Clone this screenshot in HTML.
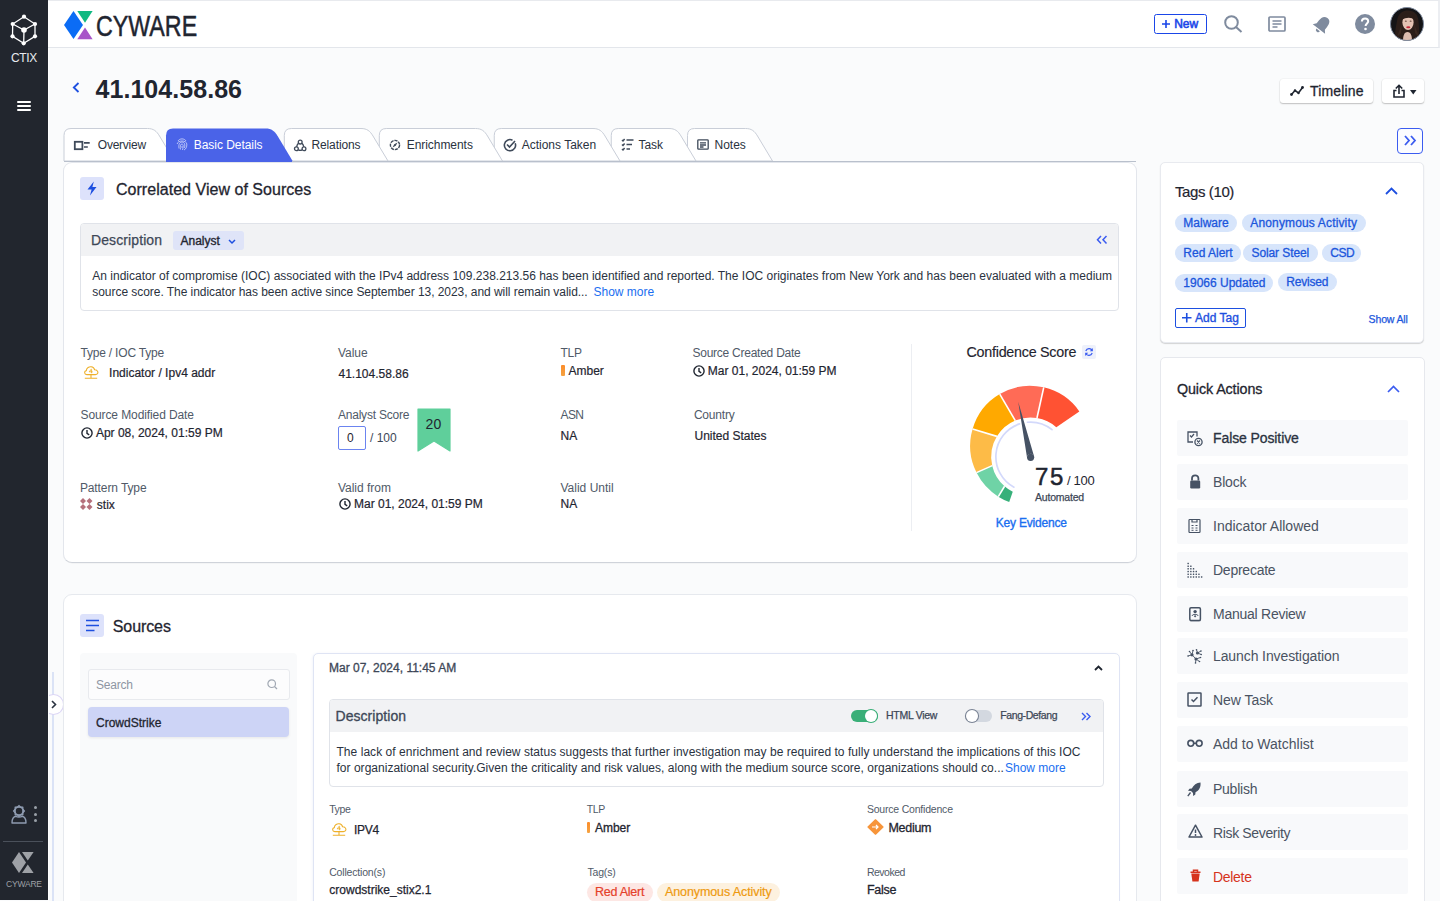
<!DOCTYPE html>
<html><head><meta charset="utf-8">
<style>
*{box-sizing:border-box;margin:0;padding:0}
html,body{width:1440px;height:901px;overflow:hidden}
body{position:relative;background:#fafbfc;font-family:"Liberation Sans",sans-serif;color:#1f2530}
.a{position:absolute;white-space:nowrap}
svg.a{overflow:visible}
</style></head>
<body>

<div class="a" style="left:0px;top:0px;width:48px;height:900px;background:#22262e"></div>
<div class="a" style="left:48px;top:48px;width:1.4px;height:853px;background:#fff"></div>
<svg class="a" style="left:11px;top:15px;" width="26" height="30" viewBox="0 0 26 30"><g stroke="#fff" stroke-width="1.3" fill="none">
<path d="M13,1.7 L24,9 L24,21.3 L12.7,28.3 L1.5,21.3 L1.7,9 Z"/>
<path d="M1.7,9 L13,15 L24,9 M13,15 L12.7,28.3"/></g>
<g fill="#fff"><circle cx="13" cy="1.7" r="2.1"/><circle cx="24" cy="9" r="2.1"/><circle cx="24" cy="21.3" r="2.1"/><circle cx="12.7" cy="28.3" r="2.1"/><circle cx="1.5" cy="21.3" r="2.1"/><circle cx="1.7" cy="9" r="2.1"/><circle cx="13" cy="15" r="2.8"/></g></svg>
<div class="a" style="left:11px;top:51.84px;font-size:12px;line-height:12px;color:#e8eaee;letter-spacing:-0.4px;">CTIX</div>
<div class="a" style="left:17px;top:101px;width:14px;height:2px;background:#fff;border-radius:1px"></div>
<div class="a" style="left:17px;top:105px;width:14px;height:2px;background:#fff;border-radius:1px"></div>
<div class="a" style="left:17px;top:109px;width:14px;height:2px;background:#fff;border-radius:1px"></div>
<svg class="a" style="left:11px;top:805px;" width="16" height="19" viewBox="0 0 16 19"><g stroke="#8e9bb0" stroke-width="1.4" fill="none" stroke-linejoin="round"><path d="M13.40,6.00 L12.41,6.88 L12.16,7.72 L11.74,8.50 L11.82,9.82 L10.50,9.74 L9.72,10.16 L8.88,10.41 L8.00,11.40 L7.12,10.41 L6.28,10.16 L5.50,9.74 L4.18,9.82 L4.26,8.50 L3.84,7.72 L3.59,6.88 L2.60,6.00 L3.59,5.12 L3.84,4.28 L4.26,3.50 L4.18,2.18 L5.50,2.26 L6.28,1.84 L7.12,1.59 L8.00,0.60 L8.88,1.59 L9.72,1.84 L10.50,2.26 L11.82,2.18 L11.74,3.50 L12.16,4.28 L12.41,5.12 Z"/><circle cx="8" cy="6" r="0"/><path d="M1,18 C1,13 3.5,11.5 5,11.3 C6,12.3 10,12.3 11,11.3 C12.5,11.5 15,13 15,18 Z"/></g><circle cx="8" cy="6" r="4" fill="none" stroke="#8e9bb0" stroke-width="1.5"/></svg>
<div class="a" style="left:33.5px;top:806.1px;width:3px;height:3px;background:#9aa0a8;border-radius:50%"></div>
<div class="a" style="left:33.5px;top:812.9px;width:3px;height:3px;background:#9aa0a8;border-radius:50%"></div>
<div class="a" style="left:33.5px;top:819px;width:3px;height:3px;background:#9aa0a8;border-radius:50%"></div>
<div class="a" style="left:3px;top:841px;width:40px;height:1px;background:#4a505a"></div>
<svg class="a" style="left:12px;top:852px;" width="22" height="22" viewBox="0 0 22 22"><path d="M0,10.5 L7,0 L14,10.5 L7,21 Z" fill="#9ea1a6"/><path d="M10,0 L21.6,0 L15.8,8.6 Z" fill="#9ea1a6"/><path d="M15.8,12.5 L21.6,21 L10,21 Z" fill="#9ea1a6"/></svg>
<div class="a" style="left:6px;top:879.80px;font-size:8.5px;line-height:8.5px;color:#9ea1a6;letter-spacing:-0.2px;">CYWARE</div>
<div class="a" style="left:48px;top:0px;width:1392px;height:48px;background:#fff;border-top:1px solid #e8eaee;border-bottom:1px solid #e3e6eb;border-right:2px solid #eceef2"></div>
<svg class="a" style="left:63.5px;top:11.2px;" width="29" height="29" viewBox="0 0 29 29"><path d="M0,14 L9.5,0 L19,14 L9.5,28 Z" fill="#0b6cf5"/><path d="M13.3,0 L28.6,0 L21,11.8 Z" fill="#10b981"/><path d="M21,16.6 L28.6,28.2 L13.3,28.2 Z" fill="#a855c8"/></svg>
<div class="a" style="left:96px;top:10.97px;font-size:29.8px;line-height:29.8px;color:#1f2530;transform:scaleX(0.78);transform-origin:0 0;-webkit-text-stroke:0.5px #1f2530">CYWARE</div>
<div class="a" style="left:1154px;top:14px;width:53px;height:20px;border:1.5px solid #1a46e8;border-radius:2.5px"></div>
<svg class="a" style="left:1162px;top:20px;" width="8" height="8" viewBox="0 0 8 8"><path d="M4,0 V8 M0,4 H8" stroke="#1a46e8" stroke-width="1.6"/></svg>
<div class="a" style="left:1174.2px;top:17.74px;font-size:12px;line-height:12px;color:#1a46e8;-webkit-text-stroke:0.55px #1a46e8">New</div>
<svg class="a" style="left:1224px;top:15px;" width="19" height="18" viewBox="0 0 19 18"><g stroke="#7f8b9e" stroke-width="2" fill="none"><circle cx="7.5" cy="7.5" r="6.3"/><path d="M12,12 L17.5,17"/></g></svg>
<svg class="a" style="left:1268px;top:16px;" width="18" height="16" viewBox="0 0 18 16"><g stroke="#7f8b9e" stroke-width="1.7" fill="none"><rect x="1" y="1" width="16" height="14" rx="1"/><path d="M4.5,5 H13.5 M4.5,8 H13.5 M4.5,11 H9.5"/></g></svg>
<svg class="a" style="left:1311.5px;top:14.5px;" width="20" height="20" viewBox="0 0 20 20"><g fill="#7f8b9e" transform="rotate(38 10 10)"><path d="M10,1.2 C5.8,1.2 4.8,4.8 4.8,8.5 L4.8,12 L2.2,15 L17.8,15 L15.2,12 L15.2,8.5 C15.2,4.8 14.2,1.2 10,1.2 Z"/><path d="M7.8,16.3 A2.2,2.2 0 0 0 12.2,16.3 Z"/></g></svg>
<svg class="a" style="left:1355px;top:13.5px;" width="20" height="20" viewBox="0 0 20 20"><circle cx="10" cy="10" r="10" fill="#7f8b9e"/><path d="M6.9,7.6 C6.9,5.6 8.3,4.5 10.1,4.5 C12,4.5 13.2,5.7 13.2,7.3 C13.2,9.3 10.6,9.6 10.6,11.9" stroke="#fff" stroke-width="2" fill="none"/><circle cx="10.5" cy="15" r="1.3" fill="#fff"/></svg>
<svg class="a" style="left:1390px;top:7px;" width="34" height="34" viewBox="0 0 34 34"><defs><clipPath id="av"><circle cx="17" cy="17" r="16.5"/></clipPath></defs>
<g clip-path="url(#av)"><rect width="34" height="34" fill="#141416"/>
<path d="M6,34 C4,26 6,20 7,14 C8,6 13,3.5 18,3.5 C24,3.5 28,7 28.5,14 C29,21 30,27 28,34 Z" fill="#2b1e19"/>
<path d="M13,34 C13,29 14,25 17.5,25 C21,25 22,29 22,34 Z" fill="#dcbcae"/>
<ellipse cx="18" cy="15.5" rx="5.6" ry="7.6" fill="#e3c2b3"/>
<path d="M11.5,13 C12,7 16,6 19,6.5 C23,7 24.5,10 24.5,13 C22,10.5 17,9.5 11.5,13 Z" fill="#2b1e19"/>
<path d="M7,30 C9,24 11,20 12,16 L11,26 Z M29,30 C27,24 25,20 24,16 L25,26Z" fill="#3a2820"/>
<ellipse cx="18.3" cy="20.3" rx="2.1" ry="1" fill="#c52a3c"/>
<ellipse cx="15.8" cy="14.2" rx="1" ry="0.6" fill="#6b4f45"/><ellipse cx="20.6" cy="14.2" rx="1" ry="0.6" fill="#6b4f45"/></g>
<circle cx="17" cy="17" r="16.5" fill="none" stroke="#7f8b9e" stroke-width="1"/></svg>
<svg class="a" style="left:72px;top:82px;" width="8" height="11" viewBox="0 0 8 11"><path d="M6.5,1 L1.8,5.5 L6.5,10" stroke="#1d4fe0" stroke-width="1.8" fill="none"/></svg>
<div class="a" style="left:95.5px;top:77.44px;font-size:25px;line-height:25px;font-weight:700;color:#1f2530;letter-spacing:0.05px;">41.104.58.86</div>
<div class="a" style="left:1280px;top:79px;width:93px;height:24px;background:#fff;border-radius:3px;box-shadow:0 1px 1.5px rgba(0,0,0,0.22),0 0 0 0.5px rgba(0,0,0,0.05)"></div>
<svg class="a" style="left:1290px;top:86px;" width="14" height="10" viewBox="0 0 14 10"><path d="M1.5,8.5 L5,4.5 L8.5,7 L12.5,1.5" stroke="#1f2530" stroke-width="1.6" fill="none"/><g fill="#1f2530"><circle cx="1.5" cy="8.5" r="1.4"/><circle cx="5" cy="4.5" r="1.2"/><circle cx="8.5" cy="7" r="1.2"/><circle cx="12.5" cy="1.5" r="1.4"/></g></svg>
<div class="a" style="left:1310px;top:84.15px;font-size:14px;line-height:14px;color:#1f2530;letter-spacing:0.15px;-webkit-text-stroke:0.3px #1f2530">Timeline</div>
<div class="a" style="left:1382px;top:79px;width:42px;height:24px;background:#fff;border-radius:3px;box-shadow:0 1px 1.5px rgba(0,0,0,0.22),0 0 0 0.5px rgba(0,0,0,0.05)"></div>
<svg class="a" style="left:1393px;top:84px;" width="12" height="14" viewBox="0 0 12 14"><g stroke="#1f2530" stroke-width="1.6" fill="none"><path d="M6,10 V1.5 M2.8,4.5 L6,1.3 L9.2,4.5"/><path d="M3.5,6.5 H1 V13 H11 V6.5 H8.5"/></g></svg>
<svg class="a" style="left:1410px;top:90px;" width="7" height="5" viewBox="0 0 7 5"><path d="M0,0 H6.5 L3.25,4.5 Z" fill="#1f2530"/></svg>
<div class="a" style="left:1397px;top:128px;width:26px;height:26px;border:1.3px solid #3b5cf0;border-radius:4px;background:#fbfcff"></div>
<svg class="a" style="left:1404px;top:134px;" width="13" height="13" viewBox="0 0 13 13"><g stroke="#3b5cf0" stroke-width="1.8" fill="none"><path d="M1,2 L5,6.5 L1,11"/><path d="M7,2 L11,6.5 L7,11"/></g></svg>
<svg class="a" style="left:0;top:0" width="1440" height="170"><path d="M687.5,161 L687.5,135.5 Q687.5,128.5 694.5,128.5 L745.5,128.5 C751.5,128.5 754.5,131 757.5,136 L772.5,161 Z" fill="#fff" stroke="#c9ced8" stroke-width="1"/><path d="M611.25,161 L611.25,135.5 Q611.25,128.5 618.25,128.5 L669,128.5 C675,128.5 678,131 681,136 L696,161 Z" fill="#fff" stroke="#c9ced8" stroke-width="1"/><path d="M494.25,161 L494.25,135.5 Q494.25,128.5 501.25,128.5 L593,128.5 C599,128.5 602,131 605,136 L620,161 Z" fill="#fff" stroke="#c9ced8" stroke-width="1"/><path d="M379.3,161 L379.3,135.5 Q379.3,128.5 386.3,128.5 L475.5,128.5 C481.5,128.5 484.5,131 487.5,136 L502.5,161 Z" fill="#fff" stroke="#c9ced8" stroke-width="1"/><path d="M284.3,161 L284.3,135.5 Q284.3,128.5 291.3,128.5 L361,128.5 C367,128.5 370,131 373,136 L388,161 Z" fill="#fff" stroke="#c9ced8" stroke-width="1"/><path d="M64,161 L64,135.5 Q64,128.5 71,128.5 L147.5,128.5 C153.5,128.5 156.5,131 159.5,136 L174.5,161 Z" fill="#fff" stroke="#c9ced8" stroke-width="1"/><path d="M166,161 L166,135.5 Q166,128.5 173,128.5 L265.6,128.5 C271.6,128.5 274.6,131 277.6,136 L292.6,161 Z" fill="#4a63e8"/></svg>
<div class="a" style="left:63px;top:161.5px;width:1074px;height:401.5px;background:#fff;border:1px solid #e3e6ec;border-bottom-color:#cfd3da;border-radius:9px;box-shadow:0 0.5px 0.5px rgba(0,0,0,0.06)"></div>
<div class="a" style="left:64px;top:160.5px;width:1072px;height:1.6px;background:#b9c0cc"></div>
<div class="a" style="left:166px;top:160.5px;width:126px;height:1.6px;background:#4a63e8"></div>
<div class="a" style="left:97.8px;top:138.84px;font-size:12px;line-height:12px;color:#2a3240;letter-spacing:-0.25px;">Overview</div>
<div class="a" style="left:193.79999999999998px;top:138.84px;font-size:12px;line-height:12px;color:#fff;letter-spacing:-0.05px;">Basic Details</div>
<div class="a" style="left:311.4px;top:138.84px;font-size:12px;line-height:12px;color:#2a3240;letter-spacing:-0.1px;">Relations</div>
<div class="a" style="left:406.7px;top:138.84px;font-size:12px;line-height:12px;color:#2a3240;letter-spacing:-0.05px;">Enrichments</div>
<div class="a" style="left:521.7px;top:138.84px;font-size:12px;line-height:12px;color:#2a3240;">Actions Taken</div>
<div class="a" style="left:638.45px;top:138.84px;font-size:12px;line-height:12px;color:#2a3240;">Task</div>
<div class="a" style="left:714.5px;top:138.84px;font-size:12px;line-height:12px;color:#2a3240;">Notes</div>
<svg class="a" style="left:73px;top:140px;" width="18" height="10" viewBox="0 0 18 10"><rect x="1.8" y="1.8" width="7.6" height="7.4" fill="none" stroke="#3f4a5a" stroke-width="1.8"/><path d="M11,2.8 H16.7 M11,7 H14.8" stroke="#3f4a5a" stroke-width="1.7"/></svg>
<svg class="a" style="left:176px;top:137px;" width="12" height="14" viewBox="0 0 12 14"><g stroke="#c9d1fb" stroke-width="0.9" fill="none" opacity="0.95"><path d="M2,4 C3.5,1.2 8.5,1.2 10,4"/><path d="M1.2,7 C1.5,3 10.5,3 10.8,7 C11,10 10,12 8,13"/><path d="M3,11.5 C2.5,9 2.8,5 6,5 C9,5 9.2,8.5 8.5,11"/><path d="M4.5,12.5 C4,10 4,7 6,7 C7.5,7 7.5,9.5 6.5,13"/><path d="M6,9 V11"/></g></svg>
<svg class="a" style="left:294px;top:138.5px;" width="13" height="13" viewBox="0 0 13 13"><g stroke="#3f4a5a" stroke-width="1.3" fill="none"><circle cx="6.2" cy="3.1" r="1.9"/><circle cx="2.4" cy="9.8" r="1.9"/><circle cx="10" cy="9.8" r="1.9"/><path d="M4.4,4.2 Q3,5.8 2.6,7.9 M8,4.2 Q9.4,5.8 9.8,7.9 M4.3,10.9 Q6.2,11.9 8.1,10.9"/></g></svg>
<svg class="a" style="left:389px;top:139px;" width="12" height="12" viewBox="0 0 12 12"><g stroke="#3f4a5a" stroke-width="1.4" fill="none"><circle cx="6" cy="6" r="4.6" stroke-dasharray="3.2 0.9"/></g><path d="M8.5,3.5 L6.8,6.8 L3.5,8.5 L5.2,5.2 Z" fill="#3f4a5a"/></svg>
<svg class="a" style="left:503px;top:137.5px;" width="14" height="14" viewBox="0 0 14 14"><g stroke="#3f4a5a" stroke-width="1.6" fill="none"><path d="M12.2,5.2 A5.6,5.6 0 1 1 9.5,2.2"/><path d="M4,6.5 L6.5,9 L12,3"/></g></svg>
<svg class="a" style="left:620.5px;top:137.5px;" width="13" height="13" viewBox="0 0 13 13"><g stroke="#3f4a5a" stroke-width="1.5" fill="none"><path d="M1,2 L2,3 L3.6,1 M1,6.5 L2,7.5 L3.6,5.5 M1,11 L2,12 L3.6,10"/><path d="M5.5,2 H12.5 M5.5,6.5 H11 M5.5,11 H9"/></g></svg>
<svg class="a" style="left:697px;top:139px;" width="12" height="11" viewBox="0 0 12 11"><g stroke="#3f4a5a" stroke-width="1.3" fill="none"><rect x="0.8" y="0.8" width="10.4" height="9.4" rx="0.8"/><path d="M3,3.8 H9 M3,6 H9 M3,8 H6.5"/></g></svg>
<div class="a" style="left:80px;top:177px;width:24px;height:23px;background:#dde2fb;border-radius:3px"></div>
<svg class="a" style="left:86px;top:181px;" width="12" height="15" viewBox="0 0 12 15"><path d="M7.8,0.5 L1.5,8.5 L5.6,8.5 L4,14.5 L10.5,6 L6.4,6 Z" fill="#1d4fe0"/></svg>
<div class="a" style="left:116px;top:182.06px;font-size:16px;line-height:16px;color:#1f2530;letter-spacing:0.03px;-webkit-text-stroke:0.3px #1f2530">Correlated View of Sources</div>
<div class="a" style="left:80px;top:223px;width:1039px;height:88px;background:#fff;border:1px solid #e0e3e9;border-radius:4px;overflow:hidden"></div>
<div class="a" style="left:81px;top:224px;width:1037px;height:32px;background:#f1f2f4;border-radius:3px 3px 0 0"></div>
<div class="a" style="left:91px;top:233.15px;font-size:14px;line-height:14px;color:#3d4757;letter-spacing:0.1px;-webkit-text-stroke:0.25px #3d4757">Description</div>
<div class="a" style="left:173px;top:231px;width:71px;height:19px;background:#dfe4f8;border-radius:3px"></div>
<div class="a" style="left:180.5px;top:234.84px;font-size:12px;line-height:12px;color:#1f2530;-webkit-text-stroke:0.35px #1f2530">Analyst</div>
<svg class="a" style="left:228px;top:239px;" width="8" height="6" viewBox="0 0 8 6"><path d="M1,1 L4,4 L7,1" stroke="#1d4fe0" stroke-width="1.5" fill="none"/></svg>
<svg class="a" style="left:1096px;top:235px;" width="12" height="10" viewBox="0 0 12 10"><g stroke="#3b5cf0" stroke-width="1.5" fill="none"><path d="M5,1 L1.5,4.7 L5,8.5"/><path d="M10.5,1 L7,4.7 L10.5,8.5"/></g></svg>
<div class="a" style="left:92.3px;top:269.84px;font-size:12px;line-height:12px;color:#2a3240;">An indicator of compromise (IOC) associated with the IPv4 address 109.238.213.56 has been identified and reported. The IOC originates from New York and has been evaluated with a medium</div>
<div class="a" style="left:92.3px;top:285.84px;font-size:12px;line-height:12px;color:#2a3240;letter-spacing:-0.05px;">source score. The indicator has been active since September 13, 2023, and will remain valid...</div>
<div class="a" style="left:593.5px;top:285.84px;font-size:12px;line-height:12px;color:#1a6ef0;">Show more</div>
<div class="a" style="left:80.5px;top:346.84px;font-size:12px;line-height:12px;color:#505a68;letter-spacing:-0.2px;">Type / IOC Type</div>
<svg class="a" style="left:83px;top:366px;" width="16" height="14" viewBox="0 0 16 14"><g stroke="#eeb02a" stroke-width="1.1" fill="#fff"><path d="M3.8,8.6 C1.2,8.6 0.8,5 3.3,4.6 C3.6,1.6 6.2,0.6 8.2,0.8 C10.3,1 11.3,2.6 11.6,3.8 C14.2,3.8 15.3,5.8 14.8,7.2 C14.5,8.3 13.6,8.6 12.4,8.6 Z"/><path d="M8,8.6 V11.8 M1.8,12.3 H14.2" fill="none"/></g><path d="M8.6,2.8 L6.2,5.8 H9.6 M8.6,3.5 V7.2" stroke="#eeb02a" stroke-width="0.9" fill="none"/></svg>
<div class="a" style="left:109.1px;top:367.14px;font-size:12px;line-height:12px;color:#1f2530;-webkit-text-stroke:0.2px #1f2530">Indicator / Ipv4 addr</div>
<div class="a" style="left:337.9px;top:346.84px;font-size:12px;line-height:12px;color:#505a68;">Value</div>
<div class="a" style="left:338.5px;top:368.04px;font-size:12px;line-height:12px;color:#1f2530;-webkit-text-stroke:0.2px #1f2530">41.104.58.86</div>
<div class="a" style="left:560.5px;top:346.84px;font-size:12px;line-height:12px;color:#505a68;letter-spacing:-0.3px;">TLP</div>
<div class="a" style="left:561px;top:365px;width:3.5px;height:10.5px;background:linear-gradient(#fb8c2a,#f5a342);border-radius:1px"></div>
<div class="a" style="left:568.5px;top:365.24px;font-size:12px;line-height:12px;color:#1f2530;-webkit-text-stroke:0.2px #1f2530">Amber</div>
<div class="a" style="left:692.5px;top:346.84px;font-size:12px;line-height:12px;color:#505a68;letter-spacing:-0.25px;">Source Created Date</div>
<svg class="a" style="left:693px;top:364.5px;" width="12" height="12" viewBox="0 0 12 12"><g stroke="#1f2530" stroke-width="1.4" fill="none"><circle cx="6" cy="6" r="5.1"/><path d="M6,3 V6.3 L8.2,7.8"/></g></svg>
<div class="a" style="left:707.8px;top:365.24px;font-size:12px;line-height:12px;color:#1f2530;-webkit-text-stroke:0.2px #1f2530">Mar 01, 2024, 01:59 PM</div>
<div class="a" style="left:80.5px;top:408.84px;font-size:12px;line-height:12px;color:#505a68;letter-spacing:-0.1px;">Source Modified Date</div>
<svg class="a" style="left:81px;top:427px;" width="12" height="12" viewBox="0 0 12 12"><g stroke="#1f2530" stroke-width="1.4" fill="none"><circle cx="6" cy="6" r="5.1"/><path d="M6,3 V6.3 L8.2,7.8"/></g></svg>
<div class="a" style="left:95.9px;top:426.84px;font-size:12px;line-height:12px;color:#1f2530;-webkit-text-stroke:0.2px #1f2530">Apr 08, 2024, 01:59 PM</div>
<div class="a" style="left:337.9px;top:408.84px;font-size:12px;line-height:12px;color:#505a68;letter-spacing:-0.2px;">Analyst Score</div>
<div class="a" style="left:338px;top:426px;width:28px;height:24px;border:1px solid #6b84f0;border-radius:2px;background:#fff"></div>
<div class="a" style="left:347px;top:431.84px;font-size:12px;line-height:12px;color:#1f2530;">0</div>
<div class="a" style="left:370px;top:431.84px;font-size:12px;line-height:12px;color:#3d4757;">/ 100</div>
<svg class="a" style="left:418px;top:408.5px;" width="32" height="42" viewBox="0 0 32 42"><path d="M0,0 H32 V42 L16,32 L0,42 Z" fill="#5fcf9b" stroke="#5fcf9b" stroke-width="1.2" stroke-linejoin="round"/></svg>
<div class="a" style="left:425.5px;top:417.15px;font-size:14px;line-height:14px;color:#1f2530;letter-spacing:0.3px;">20</div>
<div class="a" style="left:560.5px;top:408.84px;font-size:12px;line-height:12px;color:#505a68;letter-spacing:-0.6px;">ASN</div>
<div class="a" style="left:560.5px;top:430.14px;font-size:12px;line-height:12px;color:#1f2530;-webkit-text-stroke:0.2px #1f2530">NA</div>
<div class="a" style="left:693.9px;top:408.84px;font-size:12px;line-height:12px;color:#505a68;letter-spacing:-0.2px;">Country</div>
<div class="a" style="left:694.5px;top:430.14px;font-size:12px;line-height:12px;color:#1f2530;-webkit-text-stroke:0.2px #1f2530">United States</div>
<div class="a" style="left:79.9px;top:482.24px;font-size:12px;line-height:12px;color:#505a68;letter-spacing:-0.1px;">Pattern Type</div>
<svg class="a" style="left:80px;top:498px;" width="13" height="12" viewBox="0 0 13 12"><g fill="#b5707c"><path d="M3,0 L6,3 L3,6 L0,3Z"/><path d="M9.5,0 L12.5,3 L9.5,6 L6.5,3Z"/><path d="M3,6 L6,9 L3,12 L0,9Z"/><path d="M9.5,6 L12.5,9 L9.5,12 L6.5,9Z"/></g></svg>
<div class="a" style="left:96.8px;top:498.84px;font-size:12px;line-height:12px;color:#1f2530;-webkit-text-stroke:0.2px #1f2530">stix</div>
<div class="a" style="left:337.9px;top:482.24px;font-size:12px;line-height:12px;color:#505a68;">Valid from</div>
<svg class="a" style="left:338.5px;top:497.5px;" width="12" height="12" viewBox="0 0 12 12"><g stroke="#1f2530" stroke-width="1.4" fill="none"><circle cx="6" cy="6" r="5.1"/><path d="M6,3 V6.3 L8.2,7.8"/></g></svg>
<div class="a" style="left:354.0px;top:498.34px;font-size:12px;line-height:12px;color:#1f2530;-webkit-text-stroke:0.2px #1f2530">Mar 01, 2024, 01:59 PM</div>
<div class="a" style="left:560.5px;top:481.84px;font-size:12px;line-height:12px;color:#505a68;">Valid Until</div>
<div class="a" style="left:560.5px;top:497.84px;font-size:12px;line-height:12px;color:#1f2530;-webkit-text-stroke:0.2px #1f2530">NA</div>
<div class="a" style="left:911.3px;top:344px;width:1.2px;height:187px;background:#eceef2"></div>
<div class="a" style="left:966.5px;top:345.10px;font-size:14.3px;line-height:14.3px;color:#1f2530;letter-spacing:-0.25px;-webkit-text-stroke:0.15px #1f2530">Confidence Score</div>
<div class="a" style="left:1082px;top:345px;width:14px;height:14px;background:#eef1fb;border-radius:2px"></div>
<svg class="a" style="left:1084px;top:347px;" width="10" height="10" viewBox="0 0 10 10"><g stroke="#3b5cf0" stroke-width="1.2" fill="none"><path d="M8.3,3.5 A3.6,3.6 0 0 0 1.8,4"/><path d="M1.7,6.5 A3.6,3.6 0 0 0 8.2,6"/></g><path d="M8.8,1 V4.2 H5.8Z M1.2,9 V5.8 H4.2Z" fill="#3b5cf0"/></svg>
<svg class="a" style="left:960px;top:380px;" width="140" height="140" viewBox="0 0 140 140"><path d="M52.76,111.77 L49.21,122.03 A60.0,60.0 0 0 1 38.31,116.65 L44.57,106.23 A39.25,39.25 0 0 0 52.76,111.77 Z" fill="#37b07a"/><path d="M44.57,106.23 L38.31,116.65 A60.0,60.0 0 0 1 16.51,92.62 L32.24,85.64 A39.25,39.25 0 0 0 44.57,106.23 Z" fill="#6fd3a6"/><path d="M32.24,85.64 L16.51,92.62 A60.0,60.0 0 0 1 12.59,49.01 L36.92,56.36 A39.25,39.25 0 0 0 32.24,85.64 Z" fill="#fdbb47"/><path d="M36.92,56.36 L12.59,49.01 A60.0,60.0 0 0 1 39.77,14.10 L55.28,40.55 A39.25,39.25 0 0 0 36.92,56.36 Z" fill="#ffa900"/><path d="M55.28,40.55 L39.77,14.10 A60.0,60.0 0 0 1 83.75,7.37 L76.98,38.03 A39.25,39.25 0 0 0 55.28,40.55 Z" fill="#ff6b56"/><path d="M76.98,38.03 L83.75,7.37 A60.0,60.0 0 0 1 119.35,31.42 L96.32,47.21 A39.25,39.25 0 0 0 76.98,38.03 Z" fill="#ff5233"/><path d="M44.57,106.23 L38.31,116.65" stroke="#fff" stroke-width="1.6"/><path d="M32.24,85.64 L16.51,92.62" stroke="#fff" stroke-width="1.6"/><path d="M36.92,56.36 L12.59,49.01" stroke="#fff" stroke-width="1.6"/><path d="M55.28,40.55 L39.77,14.10" stroke="#fff" stroke-width="1.6"/><path d="M76.98,38.03 L83.75,7.37" stroke="#fff" stroke-width="1.6"/><path d="M53.96,107.15 A34.6,34.6 0 0 1 59.49,43.93" stroke="#d3d9fb" stroke-width="1.7" fill="none" stroke-linecap="round"/><path d="M67.45,42.27 A34.6,34.6 0 0 1 92.01,49.66" stroke="#d3d9fb" stroke-width="1.7" fill="none" stroke-linecap="round"/><path d="M58.20,21.80 L74.11,76.52 A3.6,3.6 0 0 0 67.09,78.08 Z" fill="#465264"/><circle cx="70.60" cy="77.30" r="3.6" fill="#465264"/></svg>
<div class="a" style="left:1035px;top:464.68px;font-size:24px;line-height:24px;color:#1f2530;letter-spacing:1.6px;-webkit-text-stroke:0.5px #1f2530">75</div>
<div class="a" style="left:1067px;top:473.50px;font-size:13px;line-height:13px;color:#1f2530;letter-spacing:-0.3px;">/ 100</div>
<div class="a" style="left:1035px;top:491.61px;font-size:10.5px;line-height:10.5px;color:#3d4757;letter-spacing:-0.2px;-webkit-text-stroke:0.25px #3d4757">Automated</div>
<div class="a" style="left:995.8px;top:517.14px;font-size:12px;line-height:12px;color:#1a6ef0;letter-spacing:-0.2px;-webkit-text-stroke:0.35px #1a6ef0">Key Evidence</div>
<div class="a" style="left:1160px;top:161.5px;width:263.5px;height:181px;background:#fff;border:1px solid #e8eaef;border-radius:5px;box-shadow:0 1px 1px rgba(0,0,0,0.16)"></div>
<div class="a" style="left:1175px;top:184.30px;font-size:15px;line-height:15px;color:#1f2530;letter-spacing:-0.4px;-webkit-text-stroke:0.2px #1f2530">Tags (10)</div>
<svg class="a" style="left:1385px;top:187px;" width="13" height="8" viewBox="0 0 13 8"><path d="M1,7 L6.5,1.5 L12,7" stroke="#1d4fe0" stroke-width="1.8" fill="none"/></svg>
<div class="a" style="left:1175px;top:214.2px;width:62px;height:17.8px;background:#d7e5fb;border-radius:9px"></div>
<div class="a" style="left:1183.3px;top:217.24px;font-size:12px;line-height:12px;color:#1b56dc;-webkit-text-stroke:0.3px #1b56dc">Malware</div>
<div class="a" style="left:1242px;top:214.2px;width:123.6px;height:17.8px;background:#d7e5fb;border-radius:9px"></div>
<div class="a" style="left:1250.3px;top:217.24px;font-size:12px;line-height:12px;color:#1b56dc;letter-spacing:0.15px;-webkit-text-stroke:0.3px #1b56dc">Anonymous Activity</div>
<div class="a" style="left:1175px;top:244px;width:65.7px;height:17.8px;background:#d7e5fb;border-radius:9px"></div>
<div class="a" style="left:1183.3px;top:247.04px;font-size:12px;line-height:12px;color:#1b56dc;-webkit-text-stroke:0.3px #1b56dc">Red Alert</div>
<div class="a" style="left:1243.2px;top:244px;width:74.5px;height:17.8px;background:#d7e5fb;border-radius:9px"></div>
<div class="a" style="left:1251.5px;top:247.04px;font-size:12px;line-height:12px;color:#1b56dc;letter-spacing:-0.1px;-webkit-text-stroke:0.3px #1b56dc">Solar Steel</div>
<div class="a" style="left:1322px;top:244px;width:39px;height:17.8px;background:#d7e5fb;border-radius:9px"></div>
<div class="a" style="left:1330.3px;top:247.04px;font-size:12px;line-height:12px;color:#1b56dc;letter-spacing:-0.5px;-webkit-text-stroke:0.3px #1b56dc">CSD</div>
<div class="a" style="left:1175px;top:274px;width:98.4px;height:17.8px;background:#d7e5fb;border-radius:9px"></div>
<div class="a" style="left:1183.3px;top:277.04px;font-size:12px;line-height:12px;color:#1b56dc;-webkit-text-stroke:0.3px #1b56dc">19066 Updated</div>
<div class="a" style="left:1278px;top:273px;width:58.7px;height:17.8px;background:#d7e5fb;border-radius:9px"></div>
<div class="a" style="left:1286.3px;top:276.04px;font-size:12px;line-height:12px;color:#1b56dc;letter-spacing:-0.2px;-webkit-text-stroke:0.3px #1b56dc">Revised</div>
<div class="a" style="left:1175px;top:308px;width:71px;height:20px;border:1.3px solid #1d4fe0;border-radius:2px"></div>
<svg class="a" style="left:1181.5px;top:313px;" width="9.5" height="9.5" viewBox="0 0 9.5 9.5"><path d="M4.75,0 V9.5 M0,4.75 H9.5" stroke="#1d4fe0" stroke-width="1.6"/></svg>
<div class="a" style="left:1195px;top:312.04px;font-size:12px;line-height:12px;color:#1d4fe0;-webkit-text-stroke:0.35px #1d4fe0">Add Tag</div>
<div class="a" style="left:1368.6px;top:314.31px;font-size:10.5px;line-height:10.5px;color:#1b56dc;letter-spacing:-0.15px;-webkit-text-stroke:0.25px #1b56dc">Show All</div>
<div class="a" style="left:1160px;top:357px;width:265px;height:560px;background:#fff;border:1px solid #e6e8ed;border-radius:5px"></div>
<div class="a" style="left:1177px;top:382.00px;font-size:14.3px;line-height:14.3px;color:#1f2530;letter-spacing:-0.1px;-webkit-text-stroke:0.3px #1f2530">Quick Actions</div>
<svg class="a" style="left:1386.5px;top:385px;" width="13" height="8" viewBox="0 0 13 8"><path d="M1,7 L6.5,1.5 L12,7" stroke="#3b5cf0" stroke-width="1.7" fill="none"/></svg>
<div class="a" style="left:1177px;top:420px;width:231px;height:36px;background:#f8f9fb;border-radius:2px"></div>
<div class="a" style="left:1213px;top:431.15px;font-size:14px;line-height:14px;color:#2a3240;letter-spacing:-0.1px;-webkit-text-stroke:0.3px #2a3240">False Positive</div>
<svg class="a" style="left:1187px;top:431px;" width="16" height="16" viewBox="0 0 16 16"><g stroke="#465264" stroke-width="1.3" fill="none"><path d="M10,5.5 V1 H1 V11 H6"/><path d="M3,4.5 L4.5,6 L7,3" stroke-width="1.2"/><circle cx="11.5" cy="11" r="3.6" fill="#f7f8fa"/><path d="M10,9.5 L13,12.5 M13,9.5 L10,12.5" stroke-width="1.1"/></g></svg>
<div class="a" style="left:1177px;top:464px;width:231px;height:36px;background:#f8f9fb;border-radius:2px"></div>
<div class="a" style="left:1213px;top:475.15px;font-size:14px;line-height:14px;color:#4a5362;letter-spacing:-0.2px;">Block</div>
<svg class="a" style="left:1188.8px;top:474px;" width="13" height="16" viewBox="0 0 13 16"><path d="M3,6.5 V4.5 A3.2,3.2 0 0 1 9.4,4.5 V6.5" stroke="#465264" stroke-width="1.8" fill="none"/><rect x="1.2" y="6.5" width="10" height="8" rx="1.2" fill="#465264"/></svg>
<div class="a" style="left:1177px;top:508px;width:231px;height:36px;background:#f8f9fb;border-radius:2px"></div>
<div class="a" style="left:1213px;top:519.15px;font-size:14px;line-height:14px;color:#4a5362;">Indicator Allowed</div>
<svg class="a" style="left:1188px;top:517.5px;" width="13" height="16" viewBox="0 0 13 16"><g stroke="#465264" stroke-width="1.2" fill="none"><rect x="1" y="1.5" width="11" height="13" rx="0.8"/><path d="M4,1.5 V4 H9 V1.5"/><path d="M3.5,7.5 H5.5 M7.5,7.5 H9.5 M3.5,10 H5.5 M7.5,10 H9.5 M3.5,12.3 H5.5 M7.5,12.3 H9.5" stroke-width="1"/></g></svg>
<div class="a" style="left:1177px;top:552px;width:231px;height:36px;background:#f8f9fb;border-radius:2px"></div>
<div class="a" style="left:1213px;top:563.15px;font-size:14px;line-height:14px;color:#4a5362;letter-spacing:-0.25px;">Deprecate</div>
<svg class="a" style="left:1187px;top:562px;" width="16" height="16" viewBox="0 0 16 16"><g fill="#465264"><rect x="0.4" y="14.2" width="1.5" height="1.5" rx="0.4"/><rect x="0.4" y="11.5" width="1.5" height="1.5" rx="0.4"/><rect x="0.4" y="8.8" width="1.5" height="1.5" rx="0.4"/><rect x="0.4" y="6.1" width="1.5" height="1.5" rx="0.4"/><rect x="0.4" y="3.4" width="1.5" height="1.5" rx="0.4"/><rect x="0.4" y="0.7" width="1.5" height="1.5" rx="0.4"/><rect x="3.1" y="14.2" width="1.5" height="1.5" rx="0.4"/><rect x="3.1" y="11.5" width="1.5" height="1.5" rx="0.4"/><rect x="3.1" y="8.8" width="1.5" height="1.5" rx="0.4"/><rect x="3.1" y="6.1" width="1.5" height="1.5" rx="0.4"/><rect x="3.1" y="3.4" width="1.5" height="1.5" rx="0.4"/><rect x="5.8" y="14.2" width="1.5" height="1.5" rx="0.4"/><rect x="5.8" y="11.5" width="1.5" height="1.5" rx="0.4"/><rect x="5.8" y="8.8" width="1.5" height="1.5" rx="0.4"/><rect x="5.8" y="6.1" width="1.5" height="1.5" rx="0.4"/><rect x="8.5" y="14.2" width="1.5" height="1.5" rx="0.4"/><rect x="8.5" y="11.5" width="1.5" height="1.5" rx="0.4"/><rect x="8.5" y="8.8" width="1.5" height="1.5" rx="0.4"/><rect x="11.2" y="14.2" width="1.5" height="1.5" rx="0.4"/><rect x="11.2" y="11.5" width="1.5" height="1.5" rx="0.4"/><rect x="13.9" y="14.2" width="1.5" height="1.5" rx="0.4"/></g></svg>
<div class="a" style="left:1177px;top:596px;width:231px;height:36px;background:#f8f9fb;border-radius:2px"></div>
<div class="a" style="left:1213px;top:607.15px;font-size:14px;line-height:14px;color:#4a5362;letter-spacing:-0.25px;">Manual Review</div>
<svg class="a" style="left:1189px;top:607px;" width="13" height="15" viewBox="0 0 13 15"><g stroke="#465264" stroke-width="1.5" fill="none"><rect x="0.8" y="0.8" width="10.6" height="12.6" rx="1.2"/></g><path d="M1,13.6 H11.4" stroke="#465264" stroke-width="1.2"/><circle cx="6.1" cy="4.6" r="1.7" fill="#465264"/><path d="M3,9 C3.5,6.8 8.7,6.8 9.2,9" stroke="#465264" stroke-width="1" fill="none"/><path d="M6.1,8 L7.3,9.2 L6.1,10.4 L4.9,9.2Z" fill="#465264"/></svg>
<div class="a" style="left:1177px;top:638.2px;width:231px;height:36px;background:#f8f9fb;border-radius:2px"></div>
<div class="a" style="left:1213px;top:649.35px;font-size:14px;line-height:14px;color:#4a5362;letter-spacing:-0.1px;">Launch Investigation</div>
<svg class="a" style="left:1187px;top:649px;" width="16" height="15" viewBox="0 0 16 15"><g stroke="#465264" stroke-width="0.9"><path d="M5,5.8 L1,7"/><path d="M5,5.8 L2.5,2.5"/><path d="M5,5.8 L6,1.5"/><path d="M10.5,4 L9.5,0.8"/><path d="M10.5,4 L14,2"/><path d="M10.5,4 L14.2,5.5"/><path d="M9,10 L13.5,8.5"/><path d="M9,10 L12.5,12.5"/><path d="M9,10 L8.5,14"/><path d="M5,5.8 L9,10"/></g><g fill="#465264"><circle cx="5" cy="5.8" r="1.6"/><circle cx="10.5" cy="4" r="1.6"/><circle cx="9" cy="10" r="1.6"/><circle cx="1" cy="7" r="0.8"/><circle cx="2.5" cy="2.5" r="0.8"/><circle cx="6" cy="1.5" r="0.8"/><circle cx="9.5" cy="0.8" r="0.8"/><circle cx="14" cy="2" r="0.8"/><circle cx="14.2" cy="5.5" r="0.8"/><circle cx="13.5" cy="8.5" r="0.8"/><circle cx="12.5" cy="12.5" r="0.8"/><circle cx="8.5" cy="14" r="0.8"/></g></svg>
<div class="a" style="left:1177px;top:682px;width:231px;height:36px;background:#f8f9fb;border-radius:2px"></div>
<div class="a" style="left:1213px;top:693.15px;font-size:14px;line-height:14px;color:#4a5362;letter-spacing:-0.05px;">New Task</div>
<svg class="a" style="left:1187px;top:691.5px;" width="16" height="16" viewBox="0 0 16 16"><g stroke="#465264" stroke-width="1.5" fill="none"><rect x="1" y="1" width="13" height="13" rx="0.5"/><path d="M4.5,7.5 L6.5,9.5 L10.5,5.3"/></g></svg>
<div class="a" style="left:1177px;top:726.2px;width:231px;height:36px;background:#f8f9fb;border-radius:2px"></div>
<div class="a" style="left:1213px;top:737.35px;font-size:14px;line-height:14px;color:#4a5362;">Add to Watchlist</div>
<svg class="a" style="left:1186.5px;top:739px;" width="16" height="10" viewBox="0 0 16 10"><g stroke="#465264" stroke-width="1.6" fill="none"><circle cx="3.8" cy="4.3" r="2.9"/><circle cx="12.2" cy="4.3" r="2.9"/><path d="M6.7,4.3 H9.3"/></g></svg>
<div class="a" style="left:1177px;top:770.5px;width:231px;height:36px;background:#f8f9fb;border-radius:2px"></div>
<div class="a" style="left:1213px;top:781.65px;font-size:14px;line-height:14px;color:#4a5362;letter-spacing:-0.25px;">Publish</div>
<svg class="a" style="left:1187px;top:781.5px;" width="15" height="15" viewBox="0 0 15 15"><path d="M13.5,0.5 C9.5,0.8 6.5,3 4.8,6.5 L2.5,6.7 L1,8.8 L4,9 L6,11 L6.2,14 L8.3,12.5 L8.5,10.2 C12,8.5 14,5.5 13.5,0.5 Z" fill="#465264"/><path d="M3.5,10.5 L0.8,14.2" stroke="#465264" stroke-width="1.3"/></svg>
<div class="a" style="left:1177px;top:814.4px;width:231px;height:36px;background:#f8f9fb;border-radius:2px"></div>
<div class="a" style="left:1213px;top:825.55px;font-size:14px;line-height:14px;color:#4a5362;letter-spacing:-0.35px;">Risk Severity</div>
<svg class="a" style="left:1187.5px;top:824px;" width="15" height="15" viewBox="0 0 15 15"><g stroke="#465264" stroke-width="1.5" fill="none" stroke-linejoin="round"><path d="M7.5,1.2 L14,13 H1 Z"/><path d="M7.5,5.5 V9"/></g><circle cx="7.5" cy="11" r="0.9" fill="#465264"/></svg>
<div class="a" style="left:1177px;top:858.4px;width:231px;height:36px;background:#f8f9fb;border-radius:2px"></div>
<div class="a" style="left:1213px;top:869.55px;font-size:14px;line-height:14px;color:#d6331c;letter-spacing:-0.3px;">Delete</div>
<svg class="a" style="left:1188.5px;top:869px;" width="13" height="14" viewBox="0 0 13 14"><path d="M1.5,3.2 H11.5 M4.5,3 V1.2 H8.5 V3" stroke="#d6331c" stroke-width="1.5" fill="none"/><path d="M2.3,4.5 H10.7 L9.6,12.5 H3.4 Z" fill="#d6331c"/></svg>
<div class="a" style="left:63px;top:593.5px;width:1074px;height:340px;background:#fff;border:1px solid #e6e9ee;border-radius:9px"></div>
<div class="a" style="left:80px;top:614px;width:24px;height:23px;background:#dde2fb;border-radius:3px"></div>
<svg class="a" style="left:84.5px;top:619px;" width="15" height="13" viewBox="0 0 15 13"><path d="M1,1.5 H14 M1,6.5 H14 M1,11.5 H9.5" stroke="#1d4fe0" stroke-width="1.5"/></svg>
<div class="a" style="left:112.8px;top:618.96px;font-size:16px;line-height:16px;color:#1f2530;letter-spacing:-0.1px;-webkit-text-stroke:0.3px #1f2530">Sources</div>
<div class="a" style="left:80px;top:653px;width:217px;height:260px;background:#f9fafb;border-radius:4px 4px 0 0"></div>
<div class="a" style="left:87.5px;top:668.5px;width:202.5px;height:31px;background:#fcfcfd;border:1px solid #e8eaee;border-radius:3px"></div>
<div class="a" style="left:96px;top:678.84px;font-size:12px;line-height:12px;color:#8e96a3;letter-spacing:-0.2px;">Search</div>
<svg class="a" style="left:266.5px;top:678.5px;" width="11" height="11" viewBox="0 0 11 11"><g stroke="#a1a8b3" stroke-width="1.2" fill="none"><circle cx="4.7" cy="4.7" r="3.8"/><path d="M7.5,7.5 L10,10"/></g></svg>
<div class="a" style="left:88px;top:707px;width:201px;height:30px;background:#cdd4f6;border-radius:4px;box-shadow:0 1px 3px rgba(0,0,0,0.08)"></div>
<div class="a" style="left:96px;top:716.84px;font-size:12px;line-height:12px;color:#1f2530;-webkit-text-stroke:0.3px #1f2530">CrowdStrike</div>
<div class="a" style="left:313px;top:653px;width:807px;height:260px;background:#fff;border:1px solid #dfe4f4;border-radius:5px;box-shadow:-1px 0 2px rgba(120,140,200,0.08)"></div>
<div class="a" style="left:329px;top:661.94px;font-size:12px;line-height:12px;color:#3d4757;-webkit-text-stroke:0.3px #3d4757">Mar 07, 2024, 11:45 AM</div>
<svg class="a" style="left:1094px;top:664.5px;" width="9" height="6" viewBox="0 0 9 6"><path d="M1,5 L4.5,1.5 L8,5" stroke="#1f2530" stroke-width="1.8" fill="none"/></svg>
<div class="a" style="left:329px;top:699.3px;width:775px;height:88px;background:#fff;border:1px solid #e0e3e9;border-radius:4px;overflow:hidden"></div>
<div class="a" style="left:330px;top:700.3px;width:773px;height:31.5px;background:#f1f2f4;border-radius:3px 3px 0 0"></div>
<div class="a" style="left:335.5px;top:709.15px;font-size:14px;line-height:14px;color:#3d4757;letter-spacing:0.05px;-webkit-text-stroke:0.3px #3d4757">Description</div>
<div class="a" style="left:851px;top:709.7px;width:27px;height:12.5px;background:#3aaf78;border-radius:6.5px"></div>
<div class="a" style="left:865.3px;top:710px;width:11.8px;height:11.8px;background:#fff;border-radius:50%;box-shadow:0 0 0 1px #3aaf78"></div>
<div class="a" style="left:886px;top:710.41px;font-size:10.5px;line-height:10.5px;color:#3d4757;letter-spacing:-0.28px;-webkit-text-stroke:0.25px #3d4757">HTML View</div>
<div class="a" style="left:965.4px;top:709.7px;width:26.3px;height:12.5px;background:#d3d8e0;border-radius:6.5px"></div>
<div class="a" style="left:965.6px;top:709.9px;width:12px;height:12px;background:#fff;border-radius:50%;box-shadow:0 0 0 1.1px #7a8394"></div>
<div class="a" style="left:1000.3px;top:710.41px;font-size:10.5px;line-height:10.5px;color:#3d4757;letter-spacing:-0.41px;-webkit-text-stroke:0.25px #3d4757">Fang-Defang</div>
<svg class="a" style="left:1080.5px;top:712px;" width="10" height="9" viewBox="0 0 10 9"><g stroke="#3b5cf0" stroke-width="1.4" fill="none"><path d="M1,1 L4.5,4.5 L1,8"/><path d="M5.5,1 L9,4.5 L5.5,8"/></g></svg>
<div class="a" style="left:336.5px;top:746.44px;font-size:12px;line-height:12px;color:#2a3240;letter-spacing:0.04px;">The lack of enrichment and review status suggests that further investigation may be required to fully understand the implications of this IOC</div>
<div class="a" style="left:336.5px;top:762.44px;font-size:12px;line-height:12px;color:#2a3240;letter-spacing:0.02px;">for organizational security.Given the criticality and risk values, along with the medium source score, organizations should co...</div>
<div class="a" style="left:1005px;top:762.44px;font-size:12px;line-height:12px;color:#1a6ef0;">Show more</div>
<div class="a" style="left:329.2px;top:804.31px;font-size:10.5px;line-height:10.5px;color:#505a68;letter-spacing:-0.4px;">Type</div>
<svg class="a" style="left:331px;top:823px;" width="16" height="14" viewBox="0 0 16 14"><g stroke="#eeb02a" stroke-width="1.1" fill="#fff"><path d="M3.8,8.6 C1.2,8.6 0.8,5 3.3,4.6 C3.6,1.6 6.2,0.6 8.2,0.8 C10.3,1 11.3,2.6 11.6,3.8 C14.2,3.8 15.3,5.8 14.8,7.2 C14.5,8.3 13.6,8.6 12.4,8.6 Z"/><path d="M8,8.6 V11.8 M1.8,12.3 H14.2" fill="none"/></g><path d="M8.6,2.8 L6.2,5.8 H9.6 M8.6,3.5 V7.2" stroke="#eeb02a" stroke-width="0.9" fill="none"/></svg>
<div class="a" style="left:354px;top:823.64px;font-size:12px;line-height:12px;color:#1f2530;letter-spacing:-0.3px;-webkit-text-stroke:0.25px #1f2530">IPV4</div>
<div class="a" style="left:586.7px;top:804.31px;font-size:10.5px;line-height:10.5px;color:#505a68;letter-spacing:-0.4px;">TLP</div>
<div class="a" style="left:587.2px;top:822.2px;width:3px;height:10.8px;background:linear-gradient(#fb8c2a,#f5a342);border-radius:1px"></div>
<div class="a" style="left:595px;top:822.24px;font-size:12px;line-height:12px;color:#1f2530;letter-spacing:-0.05px;-webkit-text-stroke:0.3px #1f2530">Amber</div>
<div class="a" style="left:866.9000000000001px;top:804.31px;font-size:10.5px;line-height:10.5px;color:#505a68;letter-spacing:-0.2px;">Source Confidence</div>
<svg class="a" style="left:867px;top:819px;" width="17" height="16" viewBox="0 0 17 16"><path d="M8.5,0.8 L16,8 L8.5,15.2 L1,8 Z" fill="#f7953a" stroke="#f7953a" stroke-width="1.2" stroke-linejoin="round"/><path d="M5,8 H11 M9,6 L11,8 L9,10" stroke="#fff" stroke-width="1.2" fill="none"/></svg>
<div class="a" style="left:888.5px;top:821.82px;font-size:12.5px;line-height:12.5px;color:#1f2530;letter-spacing:-0.3px;-webkit-text-stroke:0.3px #1f2530">Medium</div>
<div class="a" style="left:329.2px;top:867.31px;font-size:10.5px;line-height:10.5px;color:#505a68;letter-spacing:-0.18px;">Collection(s)</div>
<div class="a" style="left:329.3px;top:883.64px;font-size:12px;line-height:12px;color:#1f2530;-webkit-text-stroke:0.25px #1f2530">crowdstrike_stix2.1</div>
<div class="a" style="left:587.5px;top:867.31px;font-size:10.5px;line-height:10.5px;color:#505a68;letter-spacing:-0.2px;">Tag(s)</div>
<div class="a" style="left:587.2px;top:883px;width:65.6px;height:19px;background:#fde7e4;border-radius:9.5px"></div>
<div class="a" style="left:595px;top:885.92px;font-size:12.5px;line-height:12.5px;color:#e5412a;letter-spacing:-0.25px;-webkit-text-stroke:0.2px #e5412a">Red Alert</div>
<div class="a" style="left:657.2px;top:883px;width:122.6px;height:19px;background:#fdf1df;border-radius:9.5px"></div>
<div class="a" style="left:665px;top:885.92px;font-size:12.5px;line-height:12.5px;color:#ee9a10;letter-spacing:-0.1px;-webkit-text-stroke:0.2px #ee9a10">Anonymous Activity</div>
<div class="a" style="left:866.9000000000001px;top:867.31px;font-size:10.5px;line-height:10.5px;color:#505a68;letter-spacing:-0.5px;">Revoked</div>
<div class="a" style="left:867px;top:883.62px;font-size:12.5px;line-height:12.5px;color:#1f2530;letter-spacing:-0.3px;-webkit-text-stroke:0.3px #1f2530">False</div>
<div class="a" style="left:52px;top:672px;width:1.8px;height:229px;background:#dbe3f6;z-index:-1"></div>
<div class="a" style="left:43.5px;top:694.5px;width:19.5px;height:19.5px;background:#fff;border-radius:50%;box-shadow:0 0 0 1px #dcd6f5;z-index:-1"></div>
<svg class="a" style="left:50.5px;top:700px;" width="6" height="9" viewBox="0 0 6 9"><path d="M1,1 L4.5,4.5 L1,8" stroke="#2a3240" stroke-width="1.6" fill="none"/></svg>
</body></html>
